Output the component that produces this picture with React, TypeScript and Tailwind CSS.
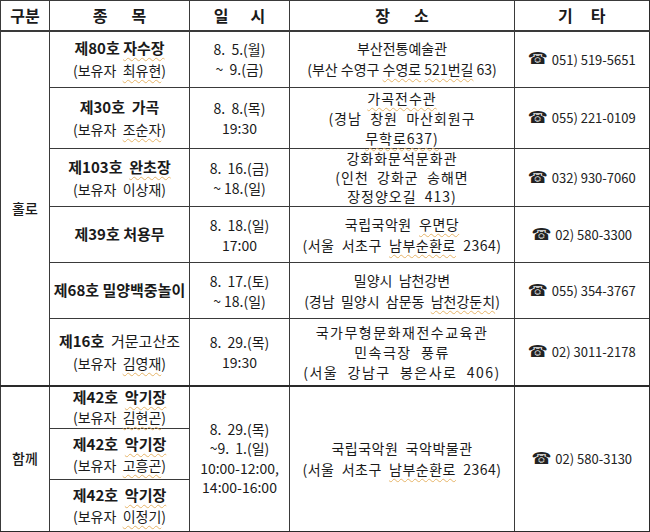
import React from "react"

const U = ({ children }: { children: React.ReactNode }) => (
  <span className="underline decoration-wavy decoration-[#e6b468] decoration-1 underline-offset-[3px]">{children}</span>
)

const td = "border border-[#3a3a3a] text-center align-middle p-0"

function Phone({ num }: { num: string }) {
  return (
    <div className="flex items-center justify-center gap-1 text-[13px] text-[#222]">
      <span className="text-[16px] leading-none font-['DejaVu_Sans',sans-serif]">☎</span>
      <span>{num}</span>
    </div>
  )
}

function Lines({ lines, className = "" }: { lines: React.ReactNode[]; className?: string }) {
  return (
    <div className={"flex flex-col items-center " + className}>
      {lines.map((l, i) => (
        <div key={i} className="whitespace-pre">
          {l}
        </div>
      ))}
    </div>
  )
}

export default function App() {
  return (
    <div className="w-[650px] h-[532px] bg-white overflow-hidden font-['Noto_Sans_CJK_KR','Noto_Sans',sans-serif] text-[#1a1a1a]">
      <table className="w-[649px] table-fixed border-collapse border-r-2 border-b-2 border-[#2a2a2a]">
        <colgroup>
          <col className="w-[49px]" />
          <col className="w-[140px]" />
          <col className="w-[100px]" />
          <col className="w-[225px]" />
          <col className="w-[135px]" />
        </colgroup>
        <thead>
          <tr className="h-[30px] text-[16px] font-bold">
            <th className={td + " border-b-2"}>구분</th>
            <th className={td + " border-b-2"}>
              <div className="flex justify-center gap-[24px]"><span>종</span><span>목</span></div>
            </th>
            <th className={td + " border-b-2"}>
              <div className="flex justify-center gap-[22px]"><span>일</span><span>시</span></div>
            </th>
            <th className={td + " border-b-2"}>
              <div className="flex justify-center gap-[24px]"><span>장</span><span>소</span></div>
            </th>
            <th className={td + " border-b-2"}>
              <div className="flex justify-center gap-[18px]"><span>기</span><span>타</span></div>
            </th>
          </tr>
        </thead>
        <tbody className="text-[14px]">
          <tr className="h-[57px]">
            <td rowSpan={6} className={td + " text-[14px] font-medium"}>홀로</td>
            <td className={td}>
              <Lines
                className="leading-[22px]"
                lines={[
                  <span className="text-[15px]"><b>제80호</b> <span className="font-semibold"><U>자수장</U></span></span>,
                  <span>(보유자  <U>최유현</U>)</span>,
                ]}
              />
            </td>
            <td className={td}>
              <Lines className="leading-[20px]" lines={["8.  5.(월)", "~  9.(금)"]} />
            </td>
            <td className={td}>
              <Lines
                className="leading-[21px]"
                lines={["부산전통예술관", <span>(부산 수영구 <U>수영로</U> <U>521번길</U> 63)</span>]}
              />
            </td>
            <td className={td}><Phone num="051)  519-5651" /></td>
          </tr>
          <tr className="h-[57px]">
            <td className={td}>
              <Lines
                className="leading-[22px]"
                lines={[<b className="text-[15px]">제30호  가곡</b>, <span>(보유자  <U>조순자</U>)</span>]}
              />
            </td>
            <td className={td}>
              <Lines className="leading-[20px]" lines={["8.  8.(목)", "19:30"]} />
            </td>
            <td className={td}>
              <Lines
                className="leading-[20px] tracking-[1px]"
                lines={[<U>가곡전수관</U>, "(경남  창원  마산회원구", <U>무학로637)</U>]}
              />
            </td>
            <td className={td}><Phone num="055)  221-0109" /></td>
          </tr>
          <tr className="h-[58px]">
            <td className={td}>
              <Lines
                className="leading-[22px]"
                lines={[<b className="text-[15px]">제103호  <U>완초장</U></b>, "(보유자  이상재)"]}
              />
            </td>
            <td className={td}>
              <Lines className="leading-[20px]" lines={["8.  16.(금)", "~ 18.(일)"]} />
            </td>
            <td className={td}>
              <Lines
                className="leading-[19px] tracking-[1px]"
                lines={["강화화문석문화관", "(인천  강화군  송해면", "장정양오길  413)"]}
              />
            </td>
            <td className={td}><Phone num="032)  930-7060" /></td>
          </tr>
          <tr className="h-[56px]">
            <td className={td}>
              <b className="text-[15px]">제39호  처용무</b>
            </td>
            <td className={td}>
              <Lines className="leading-[20px]" lines={["8.  18.(일)", "17:00"]} />
            </td>
            <td className={td}>
              <Lines
                className="leading-[21px] tracking-[0.5px]"
                lines={[<span>국립국악원  <U>우면당</U></span>, <span>(서울  서초구  <U>남부순환로</U>  2364)</span>]}
              />
            </td>
            <td className={td}><Phone num="02)  580-3300" /></td>
          </tr>
          <tr className="h-[56px]">
            <td className={td}>
              <b className="text-[15px]">제68호  밀양백중놀이</b>
            </td>
            <td className={td}>
              <Lines className="leading-[20px]" lines={["8.  17.(토)", "~ 18.(일)"]} />
            </td>
            <td className={td}>
              <Lines
                className="leading-[21px]"
                lines={["밀양시  남천강변", <span>(경남  밀양시  삼문동  <U>남천강둔치</U>)</span>]}
              />
            </td>
            <td className={td}><Phone num="055)  354-3767" /></td>
          </tr>
          <tr className="h-[67px] border-b-2 border-[#2a2a2a]">
            <td className={td}>
              <Lines
                className="leading-[22px]"
                lines={[
                  <span className="text-[15px]"><b>제16호</b>  거문고산조</span>,
                  <span>(보유자  <U>김영재</U>)</span>,
                ]}
              />
            </td>
            <td className={td}>
              <Lines className="leading-[20px]" lines={["8.  29.(목)", "19:30"]} />
            </td>
            <td className={td}>
              <Lines
                className="leading-[20px] tracking-[1.5px]"
                lines={["국가무형문화재전수교육관", "민속극장  풍류", "(서울  강남구  봉은사로  406)"]}
              />
            </td>
            <td className={td}><Phone num="02)  3011-2178" /></td>
          </tr>
          <tr className="h-[43px]">
            <td rowSpan={3} className={td + " text-[14px] font-medium"}>함께</td>
            <td className={td}>
              <Lines
                className="leading-[20px]"
                lines={[<b className="text-[15px]">제42호  <U>악기장</U></b>, <span>(보유자  <U>김현곤</U>)</span>]}
              />
            </td>
            <td rowSpan={3} className={td}>
              <Lines
                className="leading-[19.5px]"
                lines={["8.  29.(목)", "~9.  1.(일)", "10:00-12:00,", "14:00-16:00"]}
              />
            </td>
            <td rowSpan={3} className={td}>
              <Lines
                className="leading-[21px] tracking-[0.5px]"
                lines={["국립국악원  국악박물관", <span>(서울  서초구  <U>남부순환로</U>  2364)</span>]}
              />
            </td>
            <td rowSpan={3} className={td}><Phone num="02)  580-3130" /></td>
          </tr>
          <tr className="h-[51px]">
            <td className={td}>
              <Lines
                className="leading-[21px]"
                lines={[<b className="text-[15px]">제42호  <U>악기장</U></b>, <span>(보유자  <U>고흥곤</U>)</span>]}
              />
            </td>
          </tr>
          <tr className="h-[52px]">
            <td className={td}>
              <Lines
                className="leading-[21px]"
                lines={[<b className="text-[15px]">제42호  <U>악기장</U></b>, <span>(보유자  <U>이정기</U>)</span>]}
              />
            </td>
          </tr>
        </tbody>
      </table>
    </div>
  )
}
